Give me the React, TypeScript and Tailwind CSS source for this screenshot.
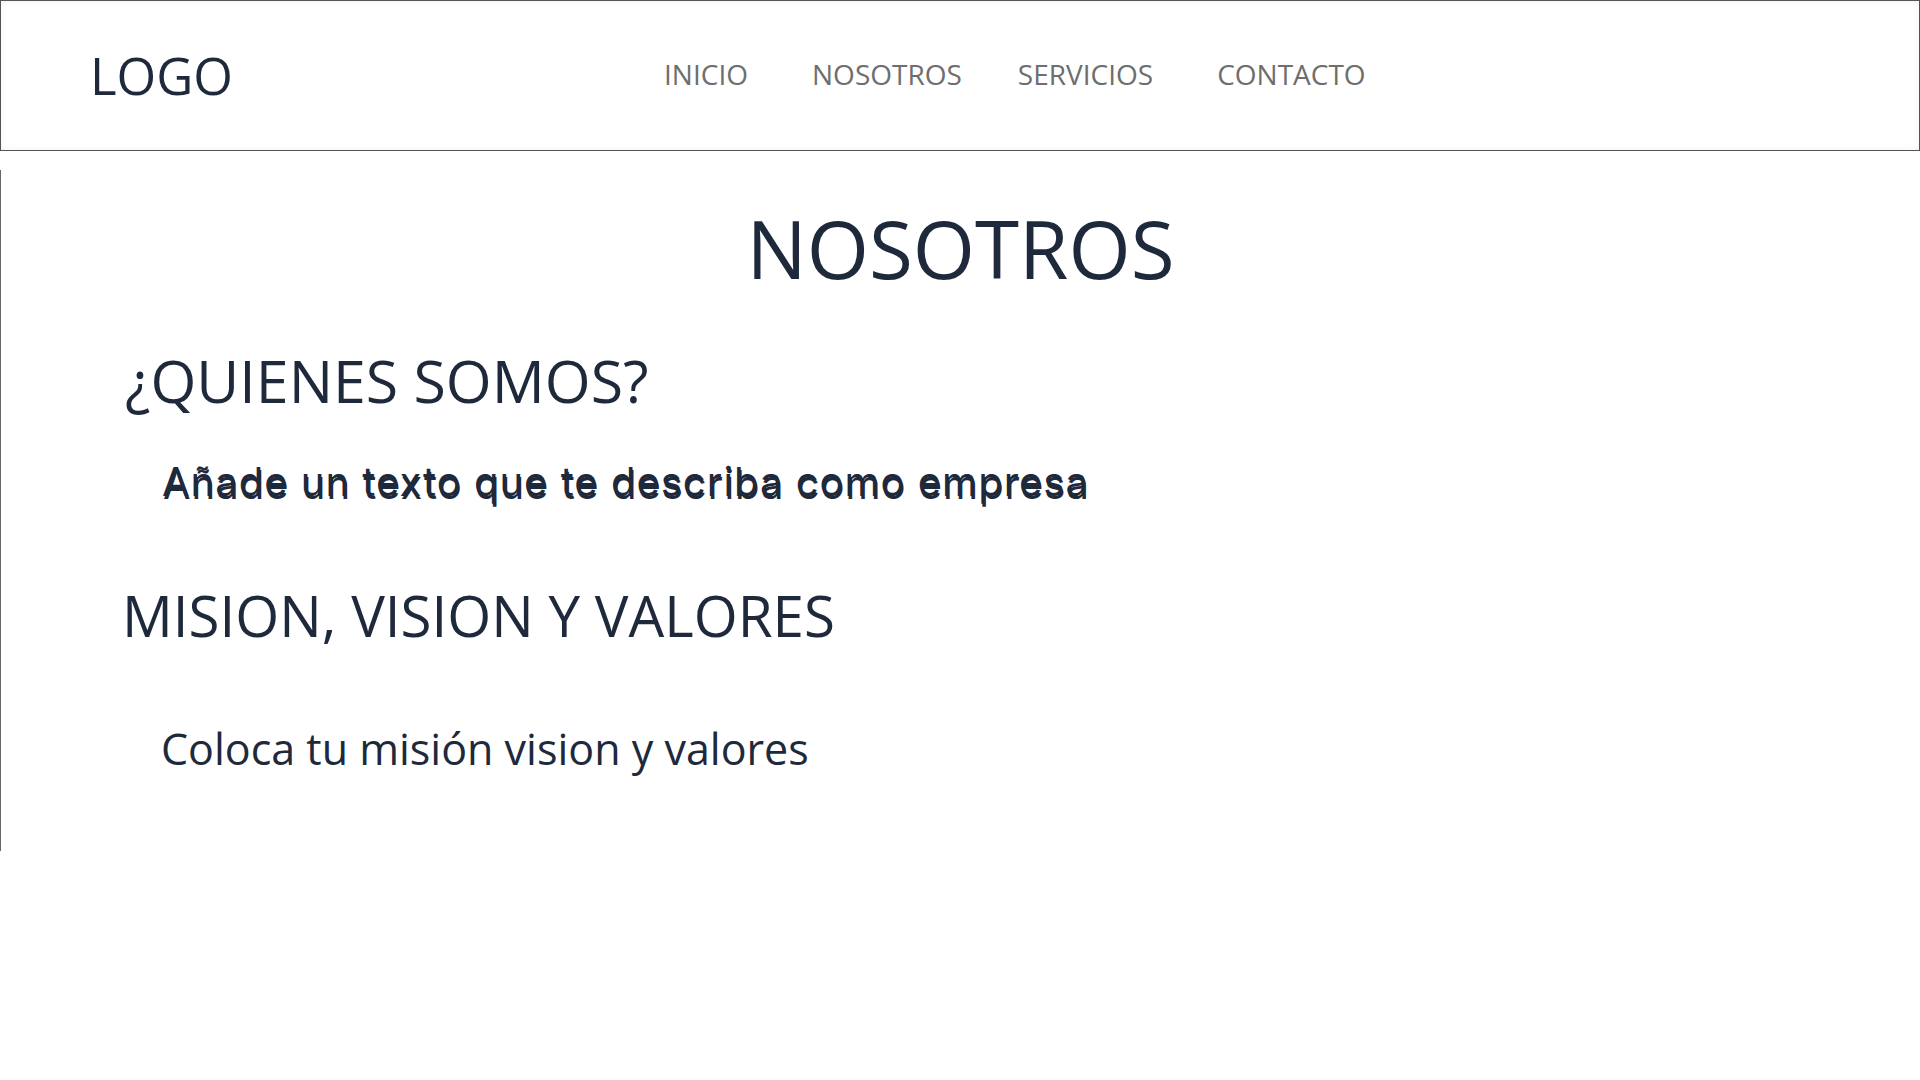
const NAV = [
  { label: "INICIO", gap: "mr-[64px]" },
  { label: "NOSOTROS", gap: "mr-[56px]" },
  { label: "SERVICIOS", gap: "mr-[64px]" },
  { label: "CONTACTO", gap: "" },
];

const App = () => (
  <div className="min-h-screen bg-white font-['Open_Sans',sans-serif] text-[#1e293b]">
    <header className="h-[151px] border border-[#555] flex items-center shadow-[inset_0_0_8px_rgba(0,0,0,0.05)]">
      <div className="ml-[89px] text-[51px] leading-none">LOGO</div>
      <nav className="ml-[431px] mb-[4px] flex text-[28px] leading-none text-[#6e6e6e]">
        {NAV.map((n) => (
          <a key={n.label} href="#" className={n.gap}>
            {n.label}
          </a>
        ))}
      </nav>
    </header>

    <section className="mt-[19px] h-[681px] border-l border-[#666] pt-[38px]">
      <h1 className="text-center text-[80px] leading-none">NOSOTROS</h1>
      <h2 className="mt-[63px] pl-[124px] text-[59px] leading-none">¿QUIENES SOMOS?</h2>
      <p className="mt-[52px] pl-[161px] font-['Inter',sans-serif] text-[40px] font-normal leading-none tracking-[1px] [text-shadow:1px_3px_0_#1e293b]">
        Añade un texto que te describa como empresa
      </p>
      <h2 className="mt-[86px] pl-[121px] text-[56.5px] leading-none">MISION, VISION Y VALORES</h2>
      <p className="mt-[82px] pl-[160px] text-[43px] leading-none">Coloca tu misión vision y valores</p>
    </section>
  </div>
);

export default App;
